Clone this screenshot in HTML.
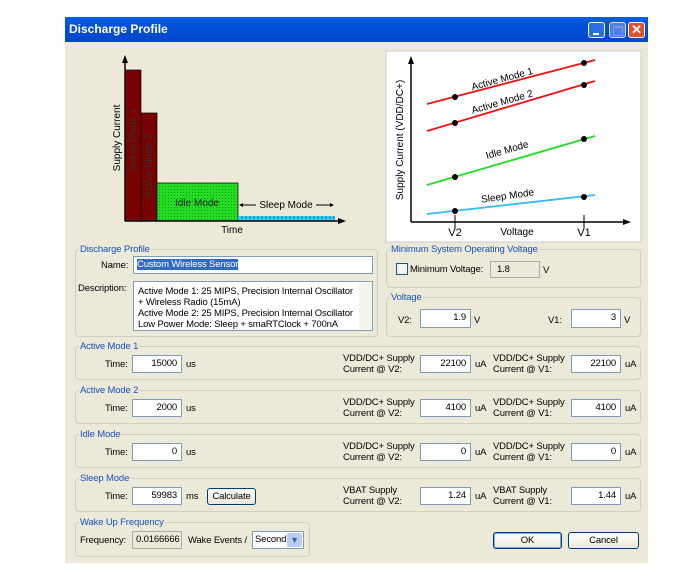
<!DOCTYPE html>
<html><head><meta charset="utf-8"><style>
body{margin:0;width:697px;height:588px;background:#fff;position:relative;overflow:hidden;font-family:"Liberation Sans",sans-serif;font-size:9.5px;letter-spacing:-0.15px;color:#000}
.a{position:absolute}
.win{left:65px;top:17px;width:583px;height:546px;background:#ece9d8}
.title{left:65px;top:17px;width:583px;height:25px;background:linear-gradient(#0a5fe0,#0350d8 40%,#0246c8);color:#fff;font-weight:bold;font-size:12px;letter-spacing:0;line-height:25px;box-sizing:border-box;padding-left:4px}
.tb{top:22px;width:17px;height:16px;border:1px solid #fff;border-radius:3px;box-sizing:border-box}
.grp{border:1px solid #d0d0bf;border-radius:4px;box-sizing:border-box}
.lg{color:#1a4fc0;background:#ece9d8;padding:0 1px;line-height:11px}
.in{background:#fff;border:1px solid #7f9db9;box-sizing:border-box;text-align:right;padding-right:4px;line-height:16px;white-space:nowrap;overflow:hidden}
.lbl{line-height:11px;white-space:nowrap}
.btn{border:1px solid #003c74;border-radius:3px;background:linear-gradient(#fff,#ece9d8);box-sizing:border-box;text-align:center}
svg{letter-spacing:0}
</style></head><body>
<div class="a win"></div>
<div class="a title">Discharge Profile</div>
<div class="a tb" style="left:588px;background:#2d6ee8"><div class="a" style="left:4px;top:10px;width:6px;height:2px;background:#fff"></div></div>
<div class="a tb" style="left:609px;background:#5c8ee6;opacity:.8"><div class="a" style="left:3px;top:3px;width:8px;height:7px;border:1px solid #aac;border-top-width:2px"></div></div>
<div class="a tb" style="left:628px;background:#e0502a;color:#fff;font-weight:bold;font-size:13px;line-height:14px;text-align:center">✕</div>

<svg class="a" style="left:0;top:0" width="697" height="588" font-family="Liberation Sans,sans-serif">
<defs><pattern id="h" width="3" height="3" patternUnits="userSpaceOnUse"><rect width="3" height="3" fill="#22dd22"/><rect width="1" height="1" fill="#119911"/></pattern>
<pattern id="c" width="4" height="5" patternUnits="userSpaceOnUse"><rect width="4" height="5" fill="#33ccee"/><circle cx="2" cy="2.5" r="1" fill="#1188bb"/></pattern></defs>
<rect x="125" y="70" width="16" height="151" fill="#7a0000" stroke="#000" stroke-width=".7"/>
<rect x="141" y="113" width="16" height="108" fill="#7a0000" stroke="#000" stroke-width=".7"/>
<rect x="157" y="183" width="81" height="38" fill="url(#h)" stroke="#000" stroke-width=".7"/>
<rect x="238" y="216" width="97" height="5" fill="url(#c)"/>
<line x1="125" y1="221" x2="125" y2="60" stroke="#000" stroke-width="1.5"/><polygon points="125,55 122,63 128,63"/>
<line x1="125" y1="221" x2="340" y2="221" stroke="#000" stroke-width="1.5"/><polygon points="346,221 338,218 338,224"/>
<text x="232" y="233" font-size="10" text-anchor="middle">Time</text>
<text transform="translate(120,138) rotate(-90)" font-size="10" text-anchor="middle">Supply Current</text>
<text transform="translate(136,140) rotate(-90)" font-size="10" text-anchor="middle" fill="#333">Active Mode 1</text>
<text transform="translate(152,166) rotate(-90)" font-size="10" text-anchor="middle" fill="#333">Active Mode 2</text>
<text x="197" y="206" font-size="10" text-anchor="middle" fill="#222">Idle Mode</text>
<text x="286" y="208" font-size="10" text-anchor="middle">Sleep Mode</text>
<line x1="242" y1="205" x2="256" y2="205" stroke="#000"/><polygon points="239,205 243,203 243,207"/>
<line x1="316" y1="205" x2="331" y2="205" stroke="#000"/><polygon points="334,205 330,203 330,207"/>

<rect x="386" y="51" width="255" height="191" fill="#fff" stroke="#ccc"/>
<line x1="411" y1="222" x2="411" y2="62" stroke="#000" stroke-width="1.5"/><polygon points="411,56 408,64 414,64"/>
<line x1="411" y1="222" x2="625" y2="222" stroke="#000" stroke-width="1.5"/><polygon points="631,222 623,219 623,225"/>
<line x1="455" y1="215" x2="455" y2="229" stroke="#000"/><line x1="584" y1="215" x2="584" y2="229" stroke="#000"/>
<g stroke-width="1.8"><line x1="427" y1="104" x2="595" y2="60" stroke="#ee1111"/><line x1="427" y1="131" x2="595" y2="81" stroke="#ee1111"/><line x1="427" y1="185" x2="595" y2="136" stroke="#22dd22"/><line x1="427" y1="214" x2="595" y2="195" stroke="#33bbee"/></g>
<g fill="#000"><circle cx="455" cy="97" r="3"/><circle cx="584" cy="63" r="3"/><circle cx="455" cy="123" r="3"/><circle cx="584" cy="85" r="3"/><circle cx="455" cy="177" r="3"/><circle cx="584" cy="139" r="3"/><circle cx="455" cy="211" r="3"/><circle cx="584" cy="197" r="3"/></g>
<g font-size="10"><text transform="translate(503,82) rotate(-15)" text-anchor="middle">Active Mode 1</text>
<text transform="translate(503,105) rotate(-16)" text-anchor="middle">Active Mode 2</text>
<text transform="translate(508,153) rotate(-16)" text-anchor="middle">Idle Mode</text>
<text transform="translate(508,199) rotate(-8)" text-anchor="middle">Sleep Mode</text>
<text x="455" y="236" text-anchor="middle" font-size="11">V2</text><text x="517" y="235" text-anchor="middle">Voltage</text><text x="584" y="236" text-anchor="middle" font-size="11">V1</text>
<text transform="translate(403,140) rotate(-90)" text-anchor="middle">Supply Current (VDD/DC+)</text></g>
</svg>

<div class="a grp" style="left:75px;top:249px;width:303px;height:88px"></div><div class="a lg" style="left:79px;top:244px">Discharge Profile</div>
<div class="a lbl" style="left:101px;top:260px">Name:</div>
<div class="a in" style="left:133px;top:256px;width:240px;height:18px;text-align:left;padding-left:3px;line-height:15px"><span style="background:#316ac5;color:#fff">Custom Wireless Sensor</span></div>
<div class="a lbl" style="left:78px;top:283px">Description:</div>
<div class="a in" style="left:133px;top:281px;width:240px;height:50px;text-align:left;padding-left:4px;line-height:11px;padding-top:4px"><div class="a" style="left:225px;top:1px;width:13px;height:46px;background:#f4f4ee"></div>Active Mode 1: 25 MIPS, Precision Internal Oscillator<br>+ Wireless Radio (15mA)<br>Active Mode 2: 25 MIPS, Precision Internal Oscillator<br>Low Power Mode: Sleep + smaRTClock + 700nA</div>

<div class="a grp" style="left:386px;top:249px;width:255px;height:39px"></div><div class="a lg" style="left:390px;top:244px">Minimum System Operating Voltage</div>
<div class="a" style="left:396px;top:263px;width:12px;height:12px;border:1px solid #1c5180;background:#f4f4ee;box-sizing:border-box"></div>
<div class="a lbl" style="left:410px;top:264px">Minimum Voltage:</div>
<div class="a in" style="left:490px;top:261px;width:50px;height:17px;background:#ece9d8;text-align:left;padding-left:6px;border-color:#aaa">1.8</div>
<div class="a lbl" style="left:543px;top:265px">V</div>

<div class="a grp" style="left:386px;top:297px;width:255px;height:40px"></div><div class="a lg" style="left:390px;top:292px">Voltage</div>
<div class="a lbl" style="left:398px;top:315px">V2:</div><div class="a in" style="left:420px;top:309px;width:51px;height:19px">1.9</div><div class="a lbl" style="left:474px;top:315px">V</div>
<div class="a lbl" style="left:548px;top:315px">V1:</div><div class="a in" style="left:571px;top:309px;width:50px;height:19px">3</div><div class="a lbl" style="left:624px;top:315px">V</div>

<div class="a grp" style="left:75px;top:346px;width:566px;height:34px"></div><div class="a lg" style="left:79px;top:341px">Active Mode 1</div>
<div class="a lbl" style="left:105px;top:359px">Time:</div><div class="a in" style="left:132px;top:355px;width:50px;height:18px">15000</div><div class="a lbl" style="left:186px;top:359px">us</div>
<div class="a lbl" style="left:343px;top:353px">VDD/DC+ Supply<br>Current @ V2:</div><div class="a in" style="left:420px;top:355px;width:51px;height:18px">22100</div><div class="a lbl" style="left:475px;top:359px">uA</div>
<div class="a lbl" style="left:493px;top:353px">VDD/DC+ Supply<br>Current @ V1:</div><div class="a in" style="left:571px;top:355px;width:50px;height:18px">22100</div><div class="a lbl" style="left:625px;top:359px">uA</div>

<div class="a grp" style="left:75px;top:390px;width:566px;height:34px"></div><div class="a lg" style="left:79px;top:385px">Active Mode 2</div>
<div class="a lbl" style="left:105px;top:403px">Time:</div><div class="a in" style="left:132px;top:399px;width:50px;height:18px">2000</div><div class="a lbl" style="left:186px;top:403px">us</div>
<div class="a lbl" style="left:343px;top:397px">VDD/DC+ Supply<br>Current @ V2:</div><div class="a in" style="left:420px;top:399px;width:51px;height:18px">4100</div><div class="a lbl" style="left:475px;top:403px">uA</div>
<div class="a lbl" style="left:493px;top:397px">VDD/DC+ Supply<br>Current @ V1:</div><div class="a in" style="left:571px;top:399px;width:50px;height:18px">4100</div><div class="a lbl" style="left:625px;top:403px">uA</div>

<div class="a grp" style="left:75px;top:434px;width:566px;height:34px"></div><div class="a lg" style="left:79px;top:429px">Idle Mode</div>
<div class="a lbl" style="left:105px;top:447px">Time:</div><div class="a in" style="left:132px;top:443px;width:50px;height:18px">0</div><div class="a lbl" style="left:186px;top:447px">us</div>
<div class="a lbl" style="left:343px;top:441px">VDD/DC+ Supply<br>Current @ V2:</div><div class="a in" style="left:420px;top:443px;width:51px;height:18px">0</div><div class="a lbl" style="left:475px;top:447px">uA</div>
<div class="a lbl" style="left:493px;top:441px">VDD/DC+ Supply<br>Current @ V1:</div><div class="a in" style="left:571px;top:443px;width:50px;height:18px">0</div><div class="a lbl" style="left:625px;top:447px">uA</div>

<div class="a grp" style="left:75px;top:478px;width:566px;height:34px"></div><div class="a lg" style="left:79px;top:473px">Sleep Mode</div>
<div class="a lbl" style="left:105px;top:491px">Time:</div><div class="a in" style="left:132px;top:487px;width:50px;height:18px">59983</div><div class="a lbl" style="left:186px;top:491px">ms</div>
<div class="a btn" style="left:207px;top:488px;width:49px;height:17px;line-height:15px">Calculate</div>
<div class="a lbl" style="left:343px;top:485px">VBAT Supply<br>Current @ V2:</div><div class="a in" style="left:420px;top:487px;width:51px;height:18px">1.24</div><div class="a lbl" style="left:475px;top:491px">uA</div>
<div class="a lbl" style="left:493px;top:485px">VBAT Supply<br>Current @ V1:</div><div class="a in" style="left:571px;top:487px;width:50px;height:18px">1.44</div><div class="a lbl" style="left:625px;top:491px">uA</div>

<div class="a grp" style="left:75px;top:522px;width:235px;height:35px"></div><div class="a lg" style="left:79px;top:517px">Wake Up Frequency</div>
<div class="a lbl" style="left:80px;top:535px">Frequency:</div>
<div class="a in" style="left:132px;top:531px;width:50px;height:18px;background:#ece9d8;border-color:#aaa;text-align:left;padding-left:3px">0.0166666</div>
<div class="a lbl" style="left:188px;top:535px">Wake Events /</div>
<div class="a in" style="left:252px;top:531px;width:52px;height:18px;text-align:left;padding-left:2px">Second</div>
<div class="a" style="left:287px;top:533px;width:15px;height:14px;background:#b8cef8;border-radius:2px;color:#4d6185;font-size:9px;text-align:center;line-height:14px">▼</div>
<div class="a btn" style="left:493px;top:532px;width:69px;height:17px;line-height:15px;border-color:#003c74;box-shadow:inset 0 0 0 1px #7ea2e8">OK</div>
<div class="a btn" style="left:568px;top:532px;width:71px;height:17px;line-height:15px">Cancel</div>
</body></html>
